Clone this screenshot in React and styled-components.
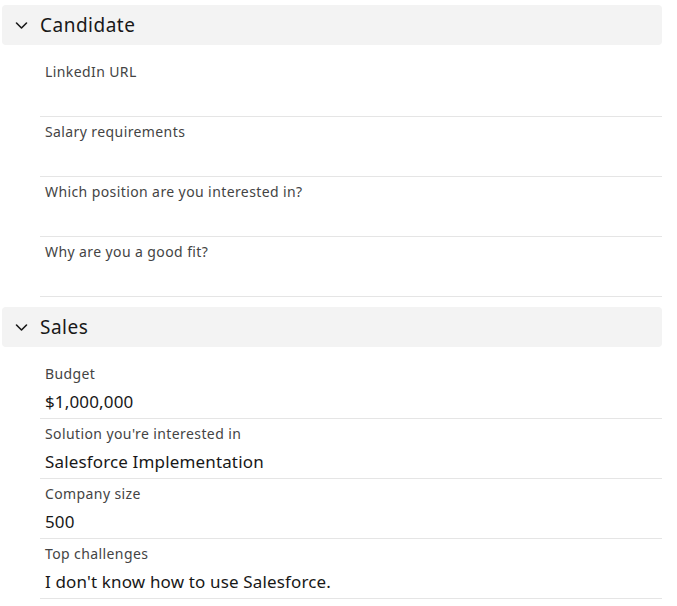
import React from 'react';
import styled, { createGlobalStyle } from 'styled-components';

const GlobalStyle = createGlobalStyle`
  body {
    margin: 0;
    background: #fff;
    font-family: "Noto Sans", "Open Sans", sans-serif;
  }
`;

const Page = styled.div`
  width: 660px;
  padding: 5px 0 0 2px;
`;

const Section = styled.section`
  & + & {
    margin-top: 10px;
  }
`;

const SectionHeader = styled.div`
  display: flex;
  align-items: center;
  height: 40px;
  padding-left: 12px;
  gap: 11px;
  background: #f3f3f3;
  border-radius: 4px;
  color: #181818;
  font-size: 19px;
  letter-spacing: 0.5px;
`;

const Chevron = () => (
  <svg width="15" height="15" viewBox="0 0 15 15" fill="none">
    <path d="M2.5 5 L7.5 10 L12.5 5" stroke="#181818" strokeWidth="1.6" strokeLinecap="round" strokeLinejoin="round" />
  </svg>
);

const FieldList = styled.div`
  padding: 12px 0 0 38px;
`;

const Field = styled.div`
  display: flex;
  flex-direction: column;
  padding: 6px 0 5px 5px;
  border-bottom: 1px solid #e5e5e5;
`;

const Label = styled.div`
  font-size: 14px;
  line-height: 18px;
  color: #444444;
  letter-spacing: 0.4px;
`;

const Value = styled.div`
  margin-top: 8px;
  min-height: 22px;
  font-size: 17px;
  line-height: 22px;
  color: #181818;
  letter-spacing: 0.15px;
`;

const sections = [
  {
    title: 'Candidate',
    fields: [
      { label: 'LinkedIn URL' },
      { label: 'Salary requirements' },
      { label: 'Which position are you interested in?' },
      { label: 'Why are you a good fit?' },
    ],
  },
  {
    title: 'Sales',
    fields: [
      { label: 'Budget', value: '$1,000,000' },
      { label: "Solution you're interested in", value: 'Salesforce Implementation' },
      { label: 'Company size', value: '500' },
      { label: 'Top challenges', value: "I don't know how to use Salesforce." },
    ],
  },
];

const App = () => {
  return (
    <Page>
      <GlobalStyle />
      {sections.map(section => (
        <Section key={section.title}>
          <SectionHeader>
            <Chevron />
            {section.title}
          </SectionHeader>
          <FieldList>
            {section.fields.map(field => (
              <Field key={field.label}>
                <Label>{field.label}</Label>
                <Value>{field.value}</Value>
              </Field>
            ))}
          </FieldList>
        </Section>
      ))}
    </Page>
  );
};

export default App;
